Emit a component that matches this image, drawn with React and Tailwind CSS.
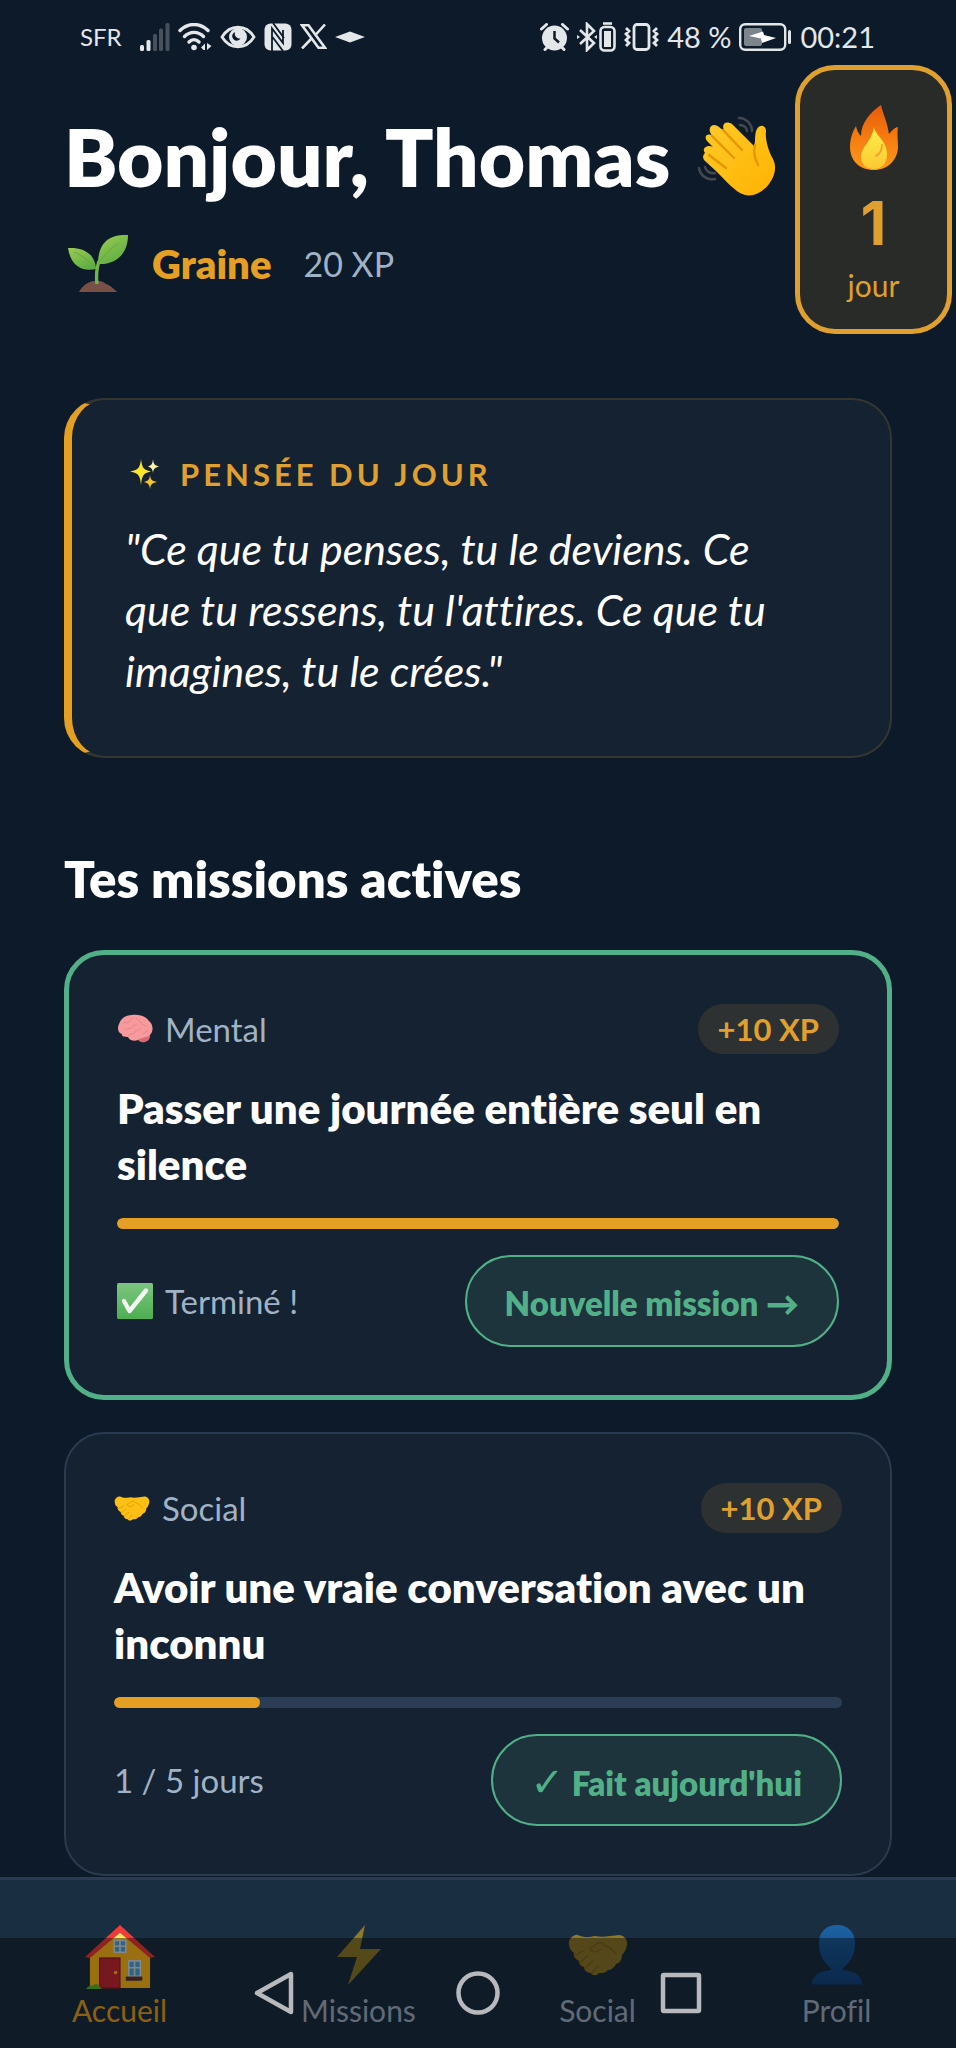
import clsx from "clsx";

/* ---------- status bar icons ---------- */

const SignalIcon = () => (
  <svg className="h-[28px] w-[30px]" viewBox="0 0 30 28" fill="#e3e7ea">
    <rect x="0" y="22" width="4" height="6" rx="1.5" />
    <rect x="6.500" y="17" width="4" height="11" rx="1.500" />
    <g fill="#46515c">
      <rect x="13" y="11" width="4" height="17" rx="1.5" />
      <rect x="19" y="5.5" width="4" height="22.500" rx="1.5" />
      <rect x="25.500" y="0" width="4" height="28" rx="1.5" />
    </g>
  </svg>
);

const WifiIcon = () => (
  <svg className="h-[28px] w-[34px]" viewBox="0 0 34 28" fill="none" stroke="#e3e7ea" strokeWidth="3.4" strokeLinecap="round">
    <path d="M2 7.500C10 -0.500 22 -0.500 30 7.500" />
    <path d="M6.500 13.500C12 8 20 8 25.500 13.500" />
    <path d="M11 19C14 16 18 16 21 19" />
    <circle cx="16" cy="24.500" r="2.800" fill="#e3e7ea" stroke="none" />
    <path d="M23 24.500l4-4v6.500h-1.500zM29 20v7l4.500-4z" fill="#e3e7ea" stroke="none" />
  </svg>
);

const EyeIcon = () => (
  <svg className="h-[24px] w-[36px]" viewBox="0 0 36 24">
    <path d="M2 12C10 -1 26 -1 34 12C26 25 10 25 2 12Z" fill="none" stroke="#e3e7ea" strokeWidth="2.800" />
    <circle cx="18" cy="12" r="9" fill="#e3e7ea" />
    <path d="M15 7a4.500 4.500 0 1 0 5.500 6.500a5 5 0 0 1-5.500-6.500z" fill="#0d1a29" />
  </svg>
);

const NfcIcon = () => (
  <svg className="h-[28px] w-[28px]" viewBox="0 0 28 28">
    <rect x="0.500" y="0.500" width="27" height="27" rx="6" fill="#e3e7ea" />
    <path d="M8 28V5.500L19 20V7M9 0l11 15M19 28L8.500 14" fill="none" stroke="#0d1a29" strokeWidth="1.800" />
  </svg>
);

const XIcon = () => (
  <svg className="h-[25px] w-[27px]" viewBox="0 0 27 25" fill="none" stroke="#e3e7ea" strokeWidth="2.600">
    <path d="M2 1.300H8.500L25 23.700H18.500Z" />
    <path d="M25 0.500L15 11.500M11.500 14.500L2 24.500" />
  </svg>
);

const DiamondIcon = () => (
  <svg className="h-[12px] w-[30px]" viewBox="0 0 30 12" fill="#e3e7ea">
    <path d="M0 6L15 0.500L30 6L15 11.500Z" />
  </svg>
);

const AlarmIcon = () => (
  <svg className="h-[28px] w-[29px]" viewBox="0 0 29 28">
    <path d="M1.500 6L6.500 1.500M27.500 6L22.500 1.500M5 26.500l3-3M24 26.500l-3-3" stroke="#e3e7ea" strokeWidth="3" strokeLinecap="round" />
    <circle cx="14.500" cy="15" r="12.500" fill="#e3e7ea" />
    <path d="M14.500 8v7.500l4.500 4" fill="none" stroke="#0d1a29" strokeWidth="2.500" />
  </svg>
);

const BluetoothIcon = () => (
  <svg className="h-[30px] w-[39px]" viewBox="0 0 39 30" fill="none" stroke="#e3e7ea" strokeWidth="2.600">
    <path d="M3 8L17 21L10 28V2L17 9L3 22" />
    <path d="M0 13l3 2l-3 2zM20 13l-3 2l3 2z" fill="#e3e7ea" stroke="none" />
    <rect x="23.500" y="5" width="14" height="23.500" rx="4" />
    <rect x="27" y="9" width="7" height="16" fill="#e3e7ea" stroke="none" />
    <path d="M26 1.500h9" />
  </svg>
);

const VibrateIcon = () => (
  <svg className="h-[28px] w-[35px]" viewBox="0 0 35 28" fill="none" stroke="#e3e7ea">
    <rect x="10" y="1.500" width="15" height="25" rx="3" strokeWidth="2.800" />
    <path d="M2 5l3 3l-3 3l3 3l-3 3l3 3l-3 3M33 5l-3 3l3 3l-3 3l3 3l-3 3l3 3" strokeWidth="2.800" />
  </svg>
);

const BatteryIcon = () => (
  <svg className="h-[28px] w-[53px]" viewBox="0 0 53 28">
    <rect x="1.200" y="1.200" width="45" height="25.600" rx="5" fill="none" stroke="#e3e7ea" strokeWidth="2.400" />
    <rect x="5" y="5" width="18" height="18" rx="2" fill="#7c848c" />
    <path d="M10 13L24 8.500L25 12L37 15L23 20L22 15.500Z" fill="#fff" />
    <rect x="49" y="7" width="3" height="14" rx="1.500" fill="#e3e7ea" />
  </svg>
);

/* ---------- emoji drawings ---------- */

const WaveHand = ({ className }) => (
  <svg className={className} viewBox="0 0 78 80">
    <defs>
      <linearGradient id="hand" x1="0" y1="0" x2="1" y2="1">
        <stop offset="0" stopColor="#ffca28" />
        <stop offset="1" stopColor="#ffb300" />
      </linearGradient>
    </defs>
    <g fill="none" stroke="#434750" strokeWidth="2.600" strokeLinecap="round">
      <path d="M41 2C48 2 54 8 54 15M42 9C46 9 49 12 49 15" />
      <path d="M1 52C2 59 9 65 17 63M7 51C8 55 12 58 17 57" />
    </g>
    <path d="M7 37C3 32 10 28 15 31L9 25C5 19 11 17 14 20L12 16C10 9 17 7 21 11L27 16C22 8 28 4 34 8L56 30C58 26 56 18 59 13C62 8 68 9 68 15C67 23 70 34 75 43C79 51 77 60 71 68C64 77 53 83 42 77C35 73 25 62 18 55L7 45C4 42 5 39 7 37Z" fill="url(#hand)" />
    <path d="M14 20L36 42M25 14L44 34M11 39L28 52M57 29C55 36 57 43 60 49" fill="none" stroke="#e59600" strokeWidth="2.400" strokeLinecap="round" />
  </svg>
);

const Seedling = ({ className }) => (
  <svg className={className} viewBox="0 0 60 60">
    <defs>
      <linearGradient id="leaf" x1="0" y1="0" x2="0.600" y2="1">
        <stop offset="0" stopColor="#9ccc4f" />
        <stop offset="1" stopColor="#5fae45" />
      </linearGradient>
    </defs>
    <path d="M11 58C14 53 16 51 20 49C25 46 34 46 38 50C42 51 46 55 49 58Z" fill="#795046" />
    <path d="M29 50C28 42 28 36 31 27" fill="none" stroke="#6fb548" strokeWidth="3.400" />
    <path d="M0 14C13 13 27 18 28 35C15 38 3 33 0 14Z" fill="url(#leaf)" />
    <path d="M60 1C44 0 30 6 30 30C48 31 60 20 60 1Z" fill="url(#leaf)" />
    <path d="M31 29C36 21 42 15 51 9M27 34C21 27 14 21 6 18" fill="none" stroke="#5fa843" strokeWidth="1" />
  </svg>
);

const Fire = ({ className }) => (
  <svg className={className} viewBox="0 0 48 66">
    <defs>
      <linearGradient id="flame" x1="0" y1="0" x2="0" y2="1">
        <stop offset="0" stopColor="#e65a0c" />
        <stop offset="0.500" stopColor="#f57c10" />
        <stop offset="1" stopColor="#fb9a1b" />
      </linearGradient>
      <linearGradient id="core" x1="0" y1="0" x2="0" y2="1">
        <stop offset="0" stopColor="#fff04a" />
        <stop offset="1" stopColor="#fbc832" />
      </linearGradient>
    </defs>
    <path d="M31 0C33 9 37 16 39 29C41 27 43 23 48 22C47 29 48 34 48 43C47 56 37 65 24 65C10 65 0 56 0 42C0 34 2 28 6 21C7 25 8 28 11 31C11 17 21 7 31 0Z" fill="url(#flame)" />
    <path d="M24 22C25 30 37 36 37 49C37 59 31 64 24 64C16 64 11 59 11 52C11 42 22 36 24 22Z" fill="url(#core)" />
    <path d="M32 40C32 46 30 49 26 51" fill="none" stroke="#f2a52a" strokeWidth="2" strokeLinecap="round" />
  </svg>
);

const Sparkles = ({ className }) => (
  <svg className={className} viewBox="0 0 30 32">
    <path d="M11 1C12 9 13 12 21 13.500C13 15 12 18 11 27C10 18 9 15 0 13.500C9 12 10 9 11 1Z" fill="#fde428" />
    <path d="M23 1C23.500 6 24.500 7.500 29 8.500C24.500 9.500 23.500 11 23 15C22.500 11 21.500 9.500 18 8.500C21.500 7.500 22.500 6 23 1Z" fill="#fff3a8" />
    <path d="M20 17C20.500 21.500 21.500 23 27 24C21.500 25 20.500 27 20 31C19.500 27 18.500 25 14 24C18.500 23 19.500 21.500 20 17Z" fill="#f6c52c" />
  </svg>
);

const Brain = ({ className }) => (
  <svg className={className} viewBox="0 0 36 30">
    <path d="M20 22C25 20 32 19 33 22C33 27 28 29 24 28C21 27 20 25 20 22Z" fill="#d96a70" />
    <path d="M2 10C4 4 9 1 15 1C21 0 29 2 32 7C36 10 37 17 33 21C30 24 24 23 21 26C17 28 12 26 11 23C7 23 4 22 5 20C1 19 0 14 2 10Z" fill="#f79a9e" />
    <path d="M6 9c2-2 4 1 6-1s1-4 4-4M8 16c2-3 5 0 7-3s4-1 5-3M19 4c1 3 4 2 5 5s4 1 5 4M11 22c2-3 5-1 7-4s5-1 6-4M26 20c1-2 4-2 5-4" fill="none" stroke="#e88489" strokeWidth="1" strokeLinecap="round" />
  </svg>
);

const Handshake = ({ className }) => (
  <svg className={className} viewBox="0 0 60 42">
    <path d="M1 10C0 5 6 0 10 1C16 4 22 3 27 2C32 3 37 3 42 2L51 1C56 1 60 6 59 11C58 16 56 19 54 21C54 25 52 29 48 30C46 34 43 36 40 36C37 40 33 39 31 39C28 43 23 41 23 39C19 39 16 36 16 33C12 32 11 29 11 27C7 25 5 22 6 19C3 17 1 14 1 10Z" fill="#fdbf13" />
    <path d="M22 14C26 13 29 7 34 9C38 14 43 12 48 20M22 14C23 19 29 19 33 15M8 21l7-4M12 28l8-6M17 34l8-7M24 39l6-7" fill="none" stroke="#dd9703" strokeWidth="1.300" strokeLinecap="round" />
  </svg>
);

const CheckMark = ({ className }) => (
  <svg className={className} viewBox="0 0 36 36">
    <defs>
      <linearGradient id="check" x1="0" y1="0" x2="0" y2="1">
        <stop offset="0" stopColor="#7cc680" />
        <stop offset="1" stopColor="#4caf50" />
      </linearGradient>
    </defs>
    <rect width="36" height="36" rx="1.500" fill="url(#check)" />
    <path d="M7 18L12.500 28L29 7.500" fill="none" stroke="#f2f7f2" strokeWidth="4.400" strokeLinecap="round" strokeLinejoin="round" />
  </svg>
);

const House = ({ className }) => (
  <svg className={className} viewBox="0 0 72 66">
    <path d="M5 32L36 5L67 32V65H5Z" fill="#ffb91a" />
    <path d="M36 7L43 14H29Z" fill="#ffe566" />
    <path d="M0 33L36 0L72 33L67 34L36 8L5 34Z" fill="#f03a36" />
    <rect x="15" y="34" width="21" height="31" fill="#c62832" stroke="#93202a" strokeWidth="1.200" />
    <circle cx="31.500" cy="49" r="1.800" fill="#ffc01e" />
    <g fill="#4fa8dc" stroke="#d8e2e8" strokeWidth="1.600">
      <path d="M30 16h12v12H30zM36 16v12M30 22h12" />
      <path d="M45 37h12v16H45zM51 37v16M45 44h12" />
    </g>
    <rect x="42" y="53" width="17" height="4.500" rx="1" fill="#5d3a34" />
    <path d="M1 66C4 62 7 63 9 62C12 59 15 63 17 66Z" fill="#5cb82f" />
  </svg>
);

const Bolt = ({ className }) => (
  <svg className={className} viewBox="0 0 44 60">
    <path d="M28 0L0 32H20L11 60L44 24H23Z" fill="#fdc614" />
  </svg>
);

const Person = ({ className }) => (
  <svg className={className} viewBox="0 0 50 60">
    <defs>
      <linearGradient id="person" x1="0" y1="0" x2="0" y2="1">
        <stop offset="0" stopColor="#1f96ff" />
        <stop offset="1" stopColor="#0c5cc0" />
      </linearGradient>
    </defs>
    <path d="M25 0C36 0 43 7 43 18C43 30 38 38 31 43V45C42 46 50 50 50 59.500H0C0 50 8 46 19 45V43C12 38 7 30 7 18C7 7 14 0 25 0Z" fill="url(#person)" />
  </svg>
);

/* ---------- data ---------- */

const missions = [
  {
    id: 1,
    category: "Mental",
    icon: <Brain className="h-[30px] w-[36px]" />,
    title: "Passer une journée entière seul en silence",
    xp: 10,
    progress: 100,
    status: "Terminé !",
    action: "Nouvelle mission →",
    done: true,
  },
  {
    id: 2,
    category: "Social",
    icon: <Handshake className="h-[25px] w-[36px]" />,
    title: "Avoir une vraie conversation avec un inconnu",
    xp: 10,
    progress: 20,
    status: "1 / 5 jours",
    action: (
      <>
        <span className="font-['DejaVu_Sans',sans-serif] text-[40px] leading-none">✓</span> Fait aujourd'hui
      </>
    ),
    done: false,
  },
];

const tabs = [
  { label: "Accueil", icon: <House className="h-16 w-[70px]" />, active: true },
  { label: "Missions", icon: <Bolt className="h-[60px] w-[44px]" /> },
  { label: "Social", icon: <Handshake className="h-[42px] w-[60px]" /> },
  { label: "Profil", icon: <Person className="h-[60px] w-[50px]" /> },
];

/* ---------- sections ---------- */

const StatusBar = () => (
  <div className="flex h-[65px] items-center justify-between pt-2 pr-[81px] pl-20 text-[#e3e7ea]">
    <div className="flex items-center gap-2">
      <span className="mr-[10px] text-2xl">SFR</span>
      <SignalIcon />
      <WifiIcon />
      <EyeIcon />
      <NfcIcon />
      <XIcon />
      <DiamondIcon />
    </div>
    <div className="flex items-center gap-2">
      <AlarmIcon />
      <BluetoothIcon />
      <VibrateIcon />
      <span className="text-[29px] leading-8">48 %</span>
      <BatteryIcon />
      <span className="text-[29px] leading-8">00:21</span>
    </div>
  </div>
);

const Header = () => (
  <header className="flex items-center justify-between pr-1 pl-16">
    <div className="flex flex-col gap-8 pt-1">
      <h1 className="flex items-center gap-7 text-[80px] leading-[92px] font-extrabold whitespace-nowrap text-white">
        Bonjour, Thomas
        <WaveHand className="h-20 w-[78px]" />
      </h1>
      <div className="flex items-center">
        <Seedling className="ml-1 h-[60px] w-[60px]" />
        <span className="ml-6 text-[40px] leading-[48px] font-extrabold text-[#e5a023]">Graine</span>
        <span className="ml-8 text-[34px] leading-[48px] text-[#a0b2c6]">20 XP</span>
      </div>
    </div>
    <div className="flex h-[269px] w-[157px] shrink-0 flex-col items-center justify-center rounded-[40px] border-[5px] border-[#e0a030] bg-[#282b28] pt-2 text-[#e0a030]">
      <Fire className="h-[66px] w-[48px]" />
      <span className="mt-4 font-[Inter,sans-serif] text-[60px] leading-[72px] font-bold">1</span>
      <span className="mt-2 text-[30px] leading-9">jour</span>
    </div>
  </header>
);

const QuoteCard = () => (
  <section className="mt-16 rounded-[40px] border-2 border-l-8 border-[#343632] border-l-[#e5a023] bg-[#152232] px-[53px] pt-14 pb-[55px]">
    <h2 className="flex items-center gap-5 pl-[5px] text-[31px] leading-9 font-bold tracking-[4px] text-[#e0a030]">
      <Sparkles className="h-8 w-[30px]" />
      PENSÉE DU JOUR
    </h2>
    <p className="mt-[26px] max-w-[680px] text-[43px] leading-[61px] text-white italic">
      "Ce que tu penses, tu le deviens. Ce que tu ressens, tu l'attires. Ce que tu imagines, tu le crées."
    </p>
  </section>
);

const MissionCard = ({ mission }) => (
  <article
    className={clsx(
      "flex flex-col gap-[26px] rounded-[40px] bg-[#152232] px-12 pt-[49px] pb-12",
      mission.done ? "border-[5px] border-[#52b088]" : "border-2 border-[#2a3b50]"
    )}
  >
    <div className="flex items-center justify-between">
      <div className="flex items-center gap-3 text-[33px] leading-10 text-[#a0b2c6]">
        {mission.icon}
        <span>{mission.category}</span>
      </div>
      <span className="rounded-full bg-[#2e3131] px-5 py-[7px] text-[31px] leading-9 font-bold text-[#e0a030]">
        +{mission.xp} XP
      </span>
    </div>
    <h3 className="text-[42px] leading-[56px] font-extrabold text-white">{mission.title}</h3>
    <div className="h-[11px] overflow-hidden rounded-full bg-[#2a3d55]">
      <div className="h-full rounded-full bg-[#e5a023]" style={{ width: `${mission.progress}%` }} />
    </div>
    <div className="flex items-center justify-between">
      <div className="flex items-center gap-3 text-[33px] leading-10 text-[#a0b2c6]">
        {mission.done && <CheckMark className="h-9 w-9" />}
        <span>{mission.status}</span>
      </div>
      <button
        type="button"
        className="h-[92px] rounded-full border-2 border-[#52b088] bg-[#1d343d] px-[38px] pt-1 text-[33px] leading-10 font-extrabold text-[#52b088]"
      >
        {mission.action}
      </button>
    </div>
  </article>
);

const TabBar = () => (
  <nav className="grid grid-cols-4 border-t-[3px] border-[#2a3b52] bg-[#1a2e42] pt-[42px] pb-5">
    {tabs.map((tab) => (
      <a key={tab.label} href="#" className="flex flex-col items-center">
        <span className={clsx("flex h-[70px] items-center", !tab.active && "pb-1 opacity-50")}>{tab.icon}</span>
        <span className={clsx("text-[30px] leading-9", tab.active ? "text-[#e5a023]" : "text-[#a0b2c6]")}>
          {tab.label}
        </span>
      </a>
    ))}
  </nav>
);

// Android navigation buttons, drawn over the tab bar
const SystemNav = () => (
  <div className="absolute inset-x-0 bottom-0 flex h-[110px] items-center justify-center gap-40 bg-black/40">
    <button type="button" aria-label="Retour">
      <svg className="h-11 w-11" viewBox="0 0 44 44" fill="none" stroke="#b8b9bc" strokeWidth="4.500" strokeLinejoin="round">
        <path d="M39 3V41L5 22Z" />
      </svg>
    </button>
    <button type="button" aria-label="Écran d'accueil">
      <svg className="h-11 w-11" viewBox="0 0 44 44" fill="none" stroke="#b8b9bc" strokeWidth="4.500">
        <circle cx="22" cy="22" r="19.500" />
      </svg>
    </button>
    <button type="button" aria-label="Applications récentes">
      <svg className="h-11 w-11" viewBox="0 0 44 44" fill="none" stroke="#b8b9bc" strokeWidth="4.500" strokeLinejoin="round">
        <rect x="3" y="4" width="36" height="36" rx="1" />
      </svg>
    </button>
  </div>
);

export default function App() {
  return (
    <div className="min-h-screen bg-[#0d1a29] font-[Lato,Inter,'DejaVu_Sans',sans-serif] [font-variant-ligatures:none]">
      <StatusBar />
      <Header />
      <main className="px-16 pb-[171px]">
        <QuoteCard />
        <h2 className="mt-[92px] text-[51px] leading-[58px] font-extrabold text-white">Tes missions actives</h2>
        <div className="mt-[42px] flex flex-col gap-8">
          {missions.map((mission) => (
            <MissionCard key={mission.id} mission={mission} />
          ))}
        </div>
      </main>
      <div className="fixed inset-x-0 bottom-0">
        <TabBar />
        <SystemNav />
      </div>
    </div>
  );
}
